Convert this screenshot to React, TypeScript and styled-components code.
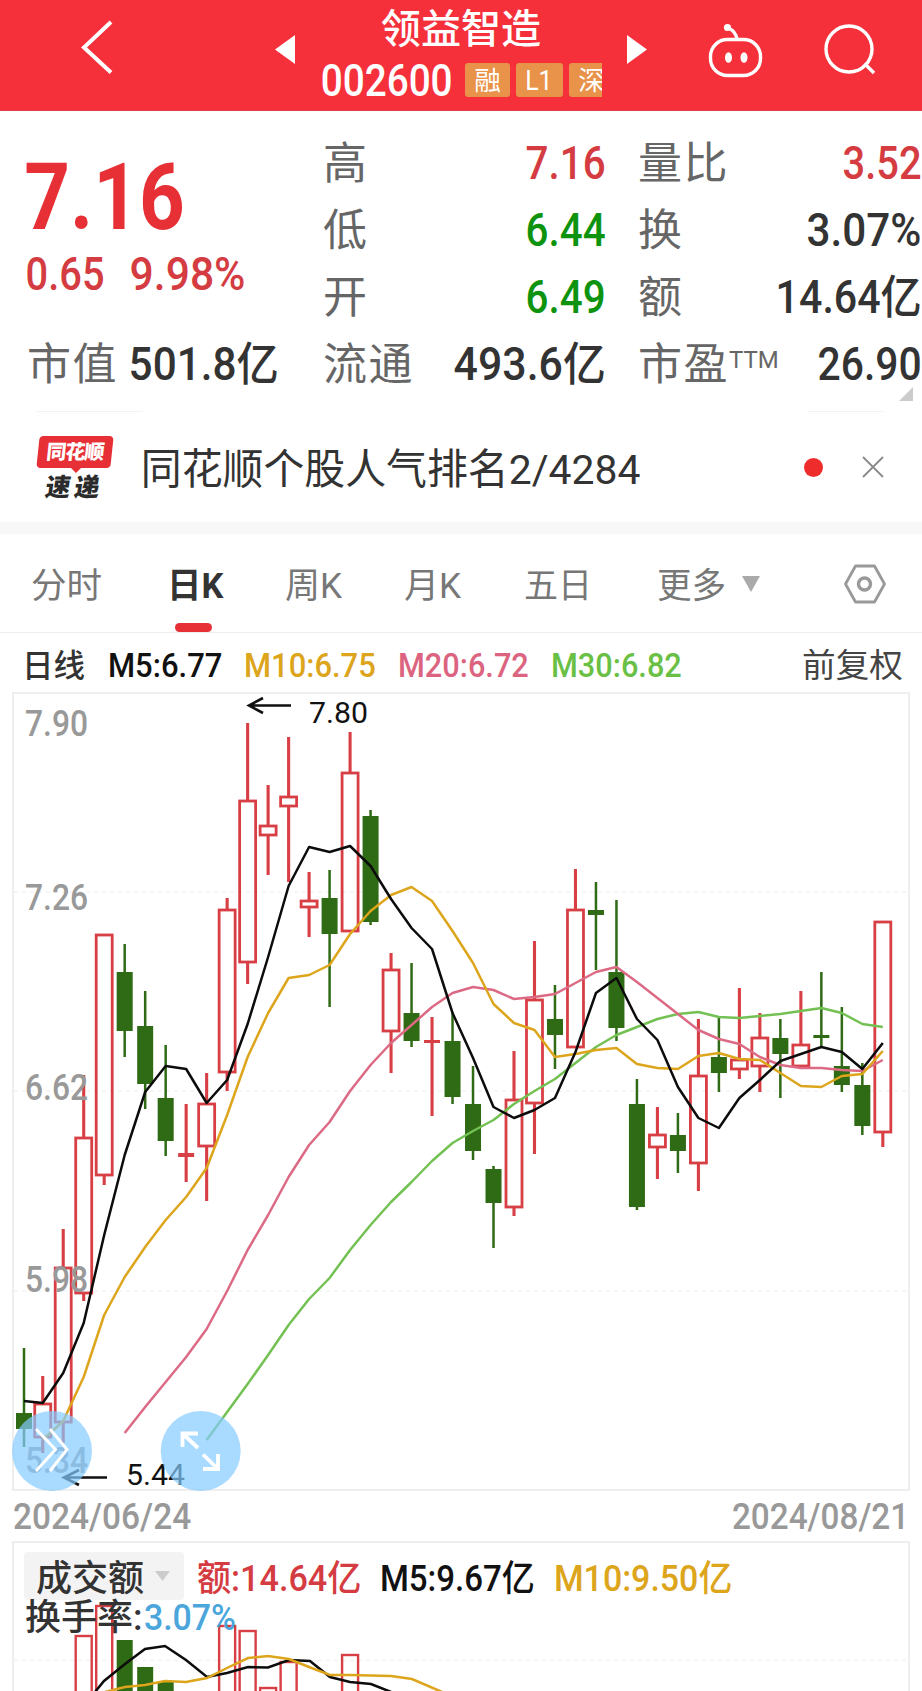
import React, { useLayoutEffect, useRef, useState } from 'react';
import styled, { createGlobalStyle } from 'styled-components';

const GlobalStyle = createGlobalStyle`
  * { box-sizing: border-box; }
  html, body { margin: 0; padding: 0; background: #fff; }
  body { font-family: Roboto, "Noto Sans CJK SC", sans-serif; overflow: hidden; }
`;

/* ---------- text that is condensed or widened to a set width ---------- */

const FitBox = styled.span<{ $w: number; $size: number; $color: string; $weight: number; $ml: number; $dy: number }>`
  display: block;
  flex: none;
  width: ${(p) => p.$w}px;
  height: ${(p) => Math.round(p.$size * 1.2)}px;
  line-height: ${(p) => Math.round(p.$size * 1.2)}px;
  margin-left: ${(p) => p.$ml}px;
  margin-top: ${(p) => p.$dy}px;
  font-size: ${(p) => p.$size}px;
  font-weight: ${(p) => p.$weight};
  color: ${(p) => p.$color};
`;
const FitInner = styled.span`
  display: inline-block;
  white-space: nowrap;
  transform-origin: 0 50%;
`;

type FitProps = { w: number; size: number; color: string; weight?: number; ml?: number; dy?: number; children: React.ReactNode };

function Fit({ w, size, color, weight = 400, ml = 0, dy = 0, children }: FitProps) {
  const ref = useRef<HTMLSpanElement>(null);
  const [scale, setScale] = useState(1);
  const pad = size * 0.03;
  useLayoutEffect(() => {
    if (ref.current) setScale((w + pad * 2) / ref.current.offsetWidth);
  }, [w, pad, children]);
  return (
    <FitBox $w={w} $size={size} $color={color} $weight={weight} $ml={ml} $dy={dy}>
      <FitInner ref={ref} style={{ transform: `translateX(${-pad}px) scaleX(${scale})` }}>
        {children}
      </FitInner>
    </FitBox>
  );
}

/* ---------- page ---------- */

const Page = styled.main`
  width: 922px;
  height: 1691px;
  overflow: hidden;
  display: flex;
  flex-direction: column;
  background: #fff;
`;

const Header = styled.header`
  flex: none;
  height: 111px;
  display: flex;
  align-items: flex-start;
  background: #f5303a;
  border-bottom: 1px solid #dc4048;
`;
const IconSlot = styled.div<{ $ml: number; $mt: number }>`
  flex: none;
  line-height: 0;
  margin: ${(p) => p.$mt}px 0 0 ${(p) => p.$ml}px;
`;
const TitleBlock = styled.div`
  width: 280px;
  margin-left: 27px;
  display: flex;
  flex-direction: column;
`;
const TitleRow = styled.div`
  height: 56px;
  display: flex;
  padding: 6px 0 0 60px;
`;
const CodeRow = styled.div`
  height: 52px;
  display: flex;
  align-items: flex-start;
`;
const Tag = styled.span<{ $w: number; $ml: number; $cut?: boolean }>`
  flex: none;
  width: ${(p) => p.$w}px;
  height: 34px;
  margin: 7px 0 0 ${(p) => p.$ml}px;
  padding: 2px 0 0 10px;
  display: flex;
  align-items: center;
  overflow: hidden;
  background: #e8924a;
  border-radius: ${(p) => (p.$cut ? '3px 0 0 3px' : '3px')};
`;

const Quote = styled.section`
  flex: none;
  height: 300px;
  padding: 19px 2px 0 27px;
  display: grid;
  grid-template-columns: 296px 281px 1fr;
  grid-template-rows: repeat(4, 67px);
`;
const PriceBlock = styled.div`
  grid-row: 1 / 4;
  display: flex;
  flex-direction: column;
  padding-top: 12px;
`;
const ChangeRow = styled.div`
  display: flex;
  margin-top: -7px;
`;
const Cell = styled.div<{ $indent?: number; $spread?: boolean }>`
  position: relative;
  display: flex;
  align-items: center;
  justify-content: ${(p) => (p.$spread ? 'space-between' : 'flex-start')};
  padding-left: ${(p) => p.$indent ?? 0}px;
`;
const Label = styled.span`
  font: 400 44px/60px "Noto Sans CJK SC", sans-serif;
  letter-spacing: 1.5px;
  color: #666;
  margin-top: -7px;
  display: flex;
`;
const Sup = styled.span`
  font: 400 24px/24px Roboto, sans-serif;
  letter-spacing: 0;
  margin: 17px 0 0 0;
`;
const Corner = styled.i`
  position: absolute;
  right: 7px;
  bottom: -3px;
  border-style: solid;
  border-width: 0 0 14px 14px;
  border-color: transparent transparent #ccc transparent;
`;

const Hairlines = styled.div`
  flex: none;
  height: 1px;
  display: flex;
  justify-content: space-between;
  padding: 0 39px 0 37px;
`;
const Hairline = styled.i<{ $w: number }>`
  width: ${(p) => p.$w}px;
  background: #f2f2f2;
`;

const Banner = styled.section`
  flex: none;
  height: 110px;
  display: flex;
  align-items: center;
`;
const BannerLogo = styled.div`
  width: 76px;
  height: 66px;
  margin: 3px 0 0 38px;
`;
const Plate = styled.div`
  width: 74px;
  height: 32px;
  transform: skewX(-6deg);
  border-radius: 4px;
  background: #e63035;
  color: #fff;
  font: 900 20px/30px "Noto Sans CJK SC", sans-serif;
  text-align: center;
  letter-spacing: -1px;
`;
const Plume = styled.i`
  display: block;
  width: 0;
  margin: 0 auto;
  border: 5px solid transparent;
  border-top-color: #e63035;
  border-bottom: 0;
`;
const Express = styled.div`
  margin: -2px 0 0 8px;
  transform: skewX(-9deg);
  color: #2b2b2b;
  font: 900 25px/28px "Noto Sans CJK SC", sans-serif;
  letter-spacing: 4px;
  white-space: nowrap;
`;
const Dot = styled.i`
  width: 19px;
  height: 19px;
  border-radius: 50%;
  background: #ee2c2c;
  margin-left: 165px;
`;
const Band = styled.div`
  flex: none;
  height: 12px;
  background: #f7f7f7;
`;

const Tabs = styled.nav`
  flex: none;
  height: 99px;
  display: flex;
  padding-top: 32px;
  border-bottom: 1px solid #eee;
`;
const Tab = styled.div<{ $ml: number }>`
  flex: none;
  display: flex;
  flex-direction: column;
  align-items: center;
  margin-left: ${(p) => p.$ml}px;
`;
const Underline = styled.i`
  width: 37px;
  height: 10px;
  margin: 15px 4px 0 0;
  border-radius: 5px;
  background: #e63035;
`;

const Legend = styled.div`
  flex: none;
  height: 59px;
  display: flex;
  align-items: center;
  padding: 6px 0 0 23px;
`;

const ChartFrame = styled.section`
  flex: none;
  position: relative;
  width: 898px;
  height: 799px;
  margin-left: 12px;
  border: 2px solid #eee;
`;
const ChartSvg = styled.svg`
  position: absolute;
  left: -14px;
  top: -2px;
  font-family: Roboto, sans-serif;
`;
const Dates = styled.div`
  flex: none;
  height: 50px;
  display: flex;
  align-items: center;
  justify-content: space-between;
  padding: 1px 14px 0 14px;
`;
const VolumeFrame = styled.section`
  flex: 1;
  position: relative;
  width: 898px;
  margin-left: 12px;
  border: 2px solid #eee;
  border-bottom: 0;
  padding: 9px 0 0 10px;
`;
const VolumeRow = styled.div`
  position: relative;
  height: 48px;
  display: flex;
  align-items: center;
`;
const Selector = styled.div`
  width: 160px;
  height: 48px;
  background: #f3f3f3;
  border-radius: 4px;
  display: flex;
  align-items: center;
`;
const TurnRow = styled.div`
  position: relative;
  height: 37px;
  display: flex;
  align-items: center;
`;

/* ---------- chart data, in page pixels ---------- */

const RED = '#d83f45';
const GREEN = '#2f6a14';
const cx = (i: number) => (i === 0 ? 24 : 104.2 + 20.49 * (i - 4));

type Candle = [up: 0 | 1, high: number, top: number, bottom: number, low: number];
const candles: Candle[] = [
  [0, 1348, 1413, 1429, 1447], [1, 1376, 1403, 1438, 1453], [1, 1229, 1267, 1423, 1443], [1, 1075, 1137, 1294, 1301],
  [1, 934, 934, 1176, 1185], [0, 944, 972, 1031, 1057], [0, 991, 1026, 1084, 1109], [0, 1045, 1098, 1141, 1156],
  [1, 1104, 1153, 1157, 1182], [1, 1073, 1103, 1147, 1201], [1, 898, 909, 1073, 1091], [1, 723, 800, 963, 984],
  [1, 785, 825, 836, 875], [1, 737, 796, 807, 882], [1, 872, 900, 908, 937], [0, 870, 898, 934, 1007],
  [1, 732, 772, 932, 932], [0, 810, 816, 922, 925], [1, 953, 969, 1032, 1073], [0, 963, 1013, 1041, 1047],
  [1, 1017, 1040, 1043, 1116], [0, 1012, 1041, 1097, 1104], [0, 1066, 1104, 1151, 1160], [0, 1166, 1169, 1203, 1248],
  [1, 1051, 1099, 1208, 1216], [1, 941, 999, 1104, 1154], [0, 985, 1019, 1035, 1069], [1, 869, 909, 1048, 1048],
  [0, 882, 910, 915, 970], [0, 900, 972, 1028, 1041], [0, 1079, 1104, 1207, 1210], [1, 1107, 1134, 1148, 1179],
  [0, 1113, 1135, 1151, 1173], [1, 1019, 1075, 1164, 1191], [0, 1017, 1057, 1073, 1092], [1, 988, 1059, 1070, 1079],
  [1, 1013, 1037, 1067, 1092], [0, 1019, 1038, 1054, 1098], [1, 991, 1044, 1067, 1067], [0, 972, 1035, 1038, 1047],
  [0, 1007, 1066, 1085, 1092], [0, 1063, 1085, 1126, 1135], [1, 921, 921, 1133, 1147],
];

const averages = [
  { color: '#74c153', from: 9, ys: [1440, 1412, 1384, 1355, 1325, 1299, 1278, 1250, 1225, 1202, 1182, 1161, 1143, 1131, 1120, 1104, 1091, 1079, 1063, 1047, 1035, 1027, 1019, 1014, 1012, 1017, 1018, 1016, 1014, 1011, 1008, 1013, 1024, 1027] },
  { color: '#dc6a85', from: 5, ys: [1433, 1407, 1382, 1357, 1329, 1291, 1250, 1215, 1177, 1145, 1122, 1091, 1065, 1043, 1025, 1007, 993, 987, 990, 999, 997, 994, 983, 972, 967, 982, 998, 1014, 1030, 1039, 1044, 1057, 1065, 1068, 1068, 1070, 1071, 1060] },
  { color: '#dda51c', from: 1, ys: [1440, 1421, 1377, 1315, 1277, 1247, 1220, 1197, 1168, 1115, 1057, 1013, 978, 975, 965, 934, 911, 895, 887, 901, 931, 963, 1004, 1023, 1030, 1057, 1054, 1050, 1048, 1064, 1068, 1069, 1056, 1053, 1059, 1060, 1073, 1086, 1087, 1076, 1074, 1051] },
  { color: '#0c0c0c', from: 0, ys: [1401, 1403, 1373, 1323, 1235, 1155, 1092, 1066, 1069, 1103, 1080, 1024, 957, 886, 847, 852, 846, 866, 899, 928, 949, 1013, 1058, 1107, 1118, 1110, 1098, 1052, 993, 978, 1019, 1040, 1087, 1118, 1128, 1098, 1080, 1061, 1054, 1047, 1052, 1069, 1043] },
];

const volumes: [i: number, up: 0 | 1, top: number][] = [
  [3, 1, 1635], [4, 1, 1605], [5, 0, 1640], [6, 0, 1667], [7, 0, 1682], [10, 1, 1625], [11, 1, 1630], [12, 1, 1687], [13, 1, 1661], [16, 1, 1654],
];

function CandleMark({ i, c }: { i: number; c: Candle }) {
  const [up, high, top, bottom, low] = c;
  const x = cx(i);
  const color = up ? RED : GREEN;
  const flat = bottom - top < 5;
  return (
    <g>
      <path d={`M${x} ${high}V${top}M${x} ${bottom}V${low}`} stroke={color} strokeWidth={up ? 3.1 : 2.5} />
      {up && !flat ? (
        <rect x={x - 8} y={top + 1} width={16} height={bottom - top - 2} fill="none" stroke={color} strokeWidth={2.8} />
      ) : (
        <rect x={x - 8} y={top} width={16} height={bottom - top} fill={color} />
      )}
    </g>
  );
}

const axis: [string, number][] = [['7.90', 736], ['7.26', 910], ['6.62', 1100], ['5.98', 1291.5], ['5.34', 1473]];

function PriceChart() {
  return (
    <ChartSvg width={922} height={799} viewBox="0 692 922 799">
      {[892, 1091, 1291].map((y) => (
        <path key={y} d={`M14 ${y}H908`} stroke="#f3f3f3" strokeWidth={1.5} strokeDasharray="4 4" />
      ))}
      {candles.map((c, i) => (
        <CandleMark key={i} i={i} c={c} />
      ))}
      {axis.map(([t, y]) => (
        <text key={t} x={25} y={y} fontSize={36} fontWeight={500} fill="#999" textLength={63} lengthAdjust="spacingAndGlyphs">
          {t}
        </text>
      ))}
      {averages.map((a) => (
        <polyline
          key={a.color}
          points={a.ys.map((y, k) => `${cx(a.from + k)},${y}`).join(' ')}
          fill="none"
          stroke={a.color}
          strokeWidth={2.5}
          strokeLinejoin="round"
        />
      ))}
      <g fill="none" stroke="#111" strokeWidth={2.6}>
        <path d="M291 705.5H249M263 698L249 705.5L263 713" />
        <path d="M107 1477.5H64M79 1470L64 1477.5L79 1485" />
      </g>
      <text x={309} y={723} fontSize={29.5} fill="#111" textLength={59} lengthAdjust="spacingAndGlyphs">7.80</text>
      <text x={126} y={1485} fontSize={29.5} fill="#111" textLength={59} lengthAdjust="spacingAndGlyphs">5.44</text>
      <circle cx={52} cy={1451} r={40} fill="#84cbff" fillOpacity={0.7} />
      <circle cx={200.7} cy={1451} r={40} fill="#84cbff" fillOpacity={0.7} />
      <g fill="none" stroke="#fff" strokeWidth={3}>
        <path d="M36 1429L55.500 1449.500L36 1471M50 1429L67 1449.500L50 1471" />
        <path d="M182.500 1447V1433.500H198M183 1434L198 1448" strokeWidth={3.800} />
        <path d="M218 1454V1469H203M218 1469L203 1454.500" strokeWidth={3.800} />
      </g>
    </ChartSvg>
  );
}

function VolumeChart() {
  return (
    <ChartSvg width={922} height={150} viewBox="0 1541 922 150">
      <path d="M14 1660.500H908" stroke="#f3f3f3" strokeWidth={1.5} strokeDasharray="4 4" />
      {volumes.map(([i, up, top]) =>
        up ? (
          <rect key={i} x={cx(i) - 8} y={top + 1} width={16} height={120} fill="none" stroke={RED} strokeWidth={2.4} />
        ) : (
          <rect key={i} x={cx(i) - 8} y={top} width={16} height={120} fill={GREEN} />
        ),
      )}
      <polyline fill="none" stroke="#0c0c0c" strokeWidth={2.5} points="95,1692 104,1681 125,1664 145,1649 165,1646 186,1660 207,1677 227,1673 248,1667 268,1667.500 289,1660 310,1661 330,1677 350,1682 371,1684 391,1692" />
      <polyline fill="none" stroke="#dda51c" strokeWidth={2.5} points="105,1692 125,1687 145,1685 165,1681 186,1682 207,1678 227,1668 248,1658 268,1656 289,1659 309,1667 330,1675 350,1675 391,1676 412,1679 442,1692" />
    </ChartSvg>
  );
}

const INK = '#333';
const UP = '#d43c42';
const DOWN = '#0e930e';

export default function App() {
  return (
    <Page>
      <GlobalStyle />
      <Header>
        <IconSlot $ml={80} $mt={18}>
          <svg width="34" height="58" fill="none" stroke="#fff" strokeWidth="4"><path d="M31 4L4 29.500L31 54.500" /></svg>
        </IconSlot>
        <IconSlot $ml={161} $mt={35}>
          <svg width="20" height="29" fill="#fff"><path d="M20 0V29L0 14.500Z" /></svg>
        </IconSlot>
        <TitleBlock>
          <TitleRow>
            <Fit w={158} size={40} color="#fff" weight={500}>领益智造</Fit>
          </TitleRow>
          <CodeRow>
            <Fit w={129} size={43.5} color="#fff" weight={500}>002600</Fit>
            <Tag $w={45} $ml={14}><Fit w={25} size={26} color="#fff">融</Fit></Tag>
            <Tag $w={47} $ml={6}><Fit w={26} size={27} color="#fff">L1</Fit></Tag>
            <Tag $w={33} $ml={6} $cut><Fit w={25} size={26} color="#fff">深</Fit></Tag>
          </CodeRow>
        </TitleBlock>
        <IconSlot $ml={25} $mt={35}>
          <svg width="20" height="29" fill="#fff"><path d="M0 0V29L20 14.500Z" /></svg>
        </IconSlot>
        <IconSlot $ml={60} $mt={22}>
          <svg width="58" height="58" fill="none" stroke="#fff" strokeWidth="3.400">
            <rect x="3.500" y="17.500" width="50" height="36" rx="17" />
            <path d="M21 6C26 8 29 11 30 17" />
            <circle cx="20.500" cy="5.500" r="3.600" fill="#fff" stroke="none" />
            <ellipse cx="21.500" cy="35.500" rx="3.500" ry="5.300" fill="#fff" stroke="none" />
            <ellipse cx="37" cy="35.500" rx="3.500" ry="5.300" fill="#fff" stroke="none" />
          </svg>
        </IconSlot>
        <IconSlot $ml={58} $mt={22}>
          <svg width="54" height="56" fill="none" stroke="#fff" strokeWidth="3.400">
            <circle cx="26" cy="27" r="23" />
            <path d="M41.500 41.500L51 51" />
          </svg>
        </IconSlot>
      </Header>

      <Quote>
        <PriceBlock>
          <Fit w={155} size={93} color="#e63035" weight={700}>7.16</Fit>
          <ChangeRow>
            <Fit w={76} size={46} color={UP} weight={500}>0.65</Fit>
            <Fit w={113} size={46} color={UP} weight={500} ml={28}>9.98%</Fit>
          </ChangeRow>
        </PriceBlock>
        <Cell $spread><Label>高</Label><Fit w={77} size={46} color={UP} weight={500}>7.16</Fit></Cell>
        <Cell $spread $indent={34}><Label>量比</Label><Fit w={76} size={46} color={UP} weight={500}>3.52</Fit></Cell>
        <Cell $spread><Label>低</Label><Fit w={77} size={46} color={DOWN} weight={500}>6.44</Fit></Cell>
        <Cell $spread $indent={34}><Label>换</Label><Fit w={112} size={46} color={INK} weight={500}>3.07%</Fit></Cell>
        <Cell $spread><Label>开</Label><Fit w={77} size={46} color={DOWN} weight={500}>6.49</Fit></Cell>
        <Cell $spread $indent={34}><Label>额</Label><Fit w={143} size={46} color={INK} weight={500}>14.64亿</Fit></Cell>
        <Cell><Label>市值</Label><Fit w={147} size={46} color={INK} weight={500} ml={12}>501.8亿</Fit></Cell>
        <Cell $spread><Label>流通</Label><Fit w={149} size={46} color={INK} weight={500}>493.6亿</Fit></Cell>
        <Cell $spread $indent={34}>
          <Label>市盈<Sup>TTM</Sup></Label>
          <Fit w={101} size={46} color={INK} weight={500}>26.90</Fit>
          <Corner />
        </Cell>
      </Quote>
      <Hairlines>
        <Hairline $w={106} />
        <Hairline $w={75} />
      </Hairlines>

      <Banner>
        <BannerLogo>
          <Plate>同花顺</Plate>
          <Plume />
          <Express>速递</Express>
        </BannerLogo>
        <Fit w={497} size={41.5} color={INK} ml={28} dy={5}>同花顺个股人气排名2/4284</Fit>
        <Dot />
        <IconSlot $ml={39} $mt={0}>
          <svg width="22" height="22" stroke="#8a8a8a" strokeWidth="1.800"><path d="M1 1L21 21M21 1L1 21" /></svg>
        </IconSlot>
      </Banner>
      <Band />

      <Tabs>
        <Tab $ml={32}><Fit w={69} size={35} color="#777">分时</Fit></Tab>
        <Tab $ml={67}><Fit w={54} size={35} color={INK} weight={700}>日K</Fit><Underline /></Tab>
        <Tab $ml={64}><Fit w={55} size={35} color="#777">周K</Fit></Tab>
        <Tab $ml={64}><Fit w={55} size={35} color="#777">月K</Fit></Tab>
        <Tab $ml={65}><Fit w={66} size={35} color="#777">五日</Fit></Tab>
        <Tab $ml={67}><Fit w={67} size={35} color="#777">更多</Fit></Tab>
        <IconSlot $ml={17} $mt={10}>
          <svg width="18" height="16" fill="#aaa"><path d="M0 0H18L9 16Z" /></svg>
        </IconSlot>
        <IconSlot $ml={83} $mt={-3}>
          <svg width="44" height="42" fill="none" stroke="#999" strokeWidth="2.800" strokeLinejoin="round">
            <path d="M12.500 3H31.500L41.500 21L31.500 39H12.500L2.500 21Z" />
            <circle cx="21.500" cy="21" r="6" strokeWidth="3.400" />
          </svg>
        </IconSlot>
      </Tabs>

      <Legend>
        <Fit w={61} size={32} color={INK} weight={500}>日线</Fit>
        <Fit w={112} size={34} color="#111" weight={500} ml={25}>M5:6.77</Fit>
        <Fit w={130} size={34} color="#dda51c" weight={500} ml={24}>M10:6.75</Fit>
        <Fit w={129} size={34} color="#dc6480" weight={500} ml={24}>M20:6.72</Fit>
        <Fit w={129} size={34} color="#6abf45" weight={500} ml={24}>M30:6.82</Fit>
        <Fit w={99} size={33} color="#444" ml={122}>前复权</Fit>
      </Legend>

      <ChartFrame>
        <PriceChart />
      </ChartFrame>

      <Dates>
        <Fit w={176} size={37} color="#999" weight={500}>2024/06/24</Fit>
        <Fit w={175} size={37} color="#999" weight={500}>2024/08/21</Fit>
      </Dates>

      <VolumeFrame>
        <VolumeChart />
        <VolumeRow>
          <Selector>
            <Fit w={106} size={36} color={INK} weight={500} ml={13} dy={7}>成交额</Fit>
            <IconSlot $ml={12} $mt={0}>
              <svg width="15" height="10" fill="#ccc"><path d="M0 0H15L7.500 10Z" /></svg>
            </IconSlot>
          </Selector>
          <Fit w={162} size={36} color={UP} weight={500} ml={14} dy={6}>额:14.64亿</Fit>
          <Fit w={153} size={36} color="#111" weight={500} ml={21} dy={6}>M5:9.67亿</Fit>
          <Fit w={176} size={36} color="#dda51c" weight={500} ml={21} dy={6}>M10:9.50亿</Fit>
        </VolumeRow>
        <TurnRow>
          <Fit w={116} size={36} color={INK} weight={500} ml={2}>换手率:</Fit>
          <Fit w={90} size={36} color="#4ba6dc" weight={500} ml={3}>3.07%</Fit>
        </TurnRow>
      </VolumeFrame>
    </Page>
  );
}
